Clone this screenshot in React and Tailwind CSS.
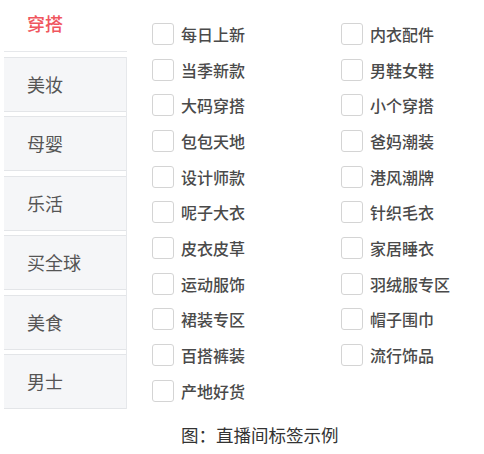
const tabs = ['美妆', '母婴', '乐活', '买全球', '美食', '男士'];

const leftTags = ['每日上新', '当季新款', '大码穿搭', '包包天地', '设计师款', '呢子大衣', '皮衣皮草', '运动服饰', '裙装专区', '百搭裤装', '产地好货'];
const rightTags = ['内衣配件', '男鞋女鞋', '小个穿搭', '爸妈潮装', '港风潮牌', '针织毛衣', '家居睡衣', '羽绒服专区', '帽子围巾', '流行饰品'];

function Tag({ label }) {
  return (
    <label className="flex items-center h-[35.7px] gap-[7px]">
      <span className="w-[22px] h-[22px] border border-[#d4d4d4] rounded-[3px] bg-white shrink-0" />
      <span className="text-[16px] font-medium text-[#4a4a4a] leading-none">{label}</span>
    </label>
  );
}

export default function App() {
  return (
    <div
      className="w-[484px] h-[454px] bg-white flex overflow-hidden"
      style={{ fontFamily: '"Noto Sans CJK SC", "Noto Sans", sans-serif' }}
    >
      <aside className="ml-[4px] w-[123px] shrink-0">
        <div className="h-[52px] border-b border-[#e6e8eb] pl-[23px] pt-[10px] text-[18px] font-medium text-[#f0565e]">穿搭</div>
        <div className="border-r border-[#e6e8eb]">
          {tabs.map((t) => (
            <div
              key={t}
              className="mt-[4.5px] h-[55px] bg-[#f5f6f8] border-t border-b border-[#e3e5e8] flex items-center pl-[23px] text-[18px] text-[#555]"
            >
              {t}
            </div>
          ))}
        </div>
      </aside>
      <main className="ml-[25px] pt-[16px] flex-1">
        <div className="grid grid-cols-[189px_1fr]">
          <div className="flex flex-col">
            {leftTags.map((t) => (
              <Tag key={t} label={t} />
            ))}
          </div>
          <div className="flex flex-col">
            {rightTags.map((t) => (
              <Tag key={t} label={t} />
            ))}
          </div>
        </div>
        <p className="mt-[14px] ml-[29px] text-[17.5px] leading-[24px] text-[#333]">图：直播间标签示例</p>
      </main>
    </div>
  );
}
